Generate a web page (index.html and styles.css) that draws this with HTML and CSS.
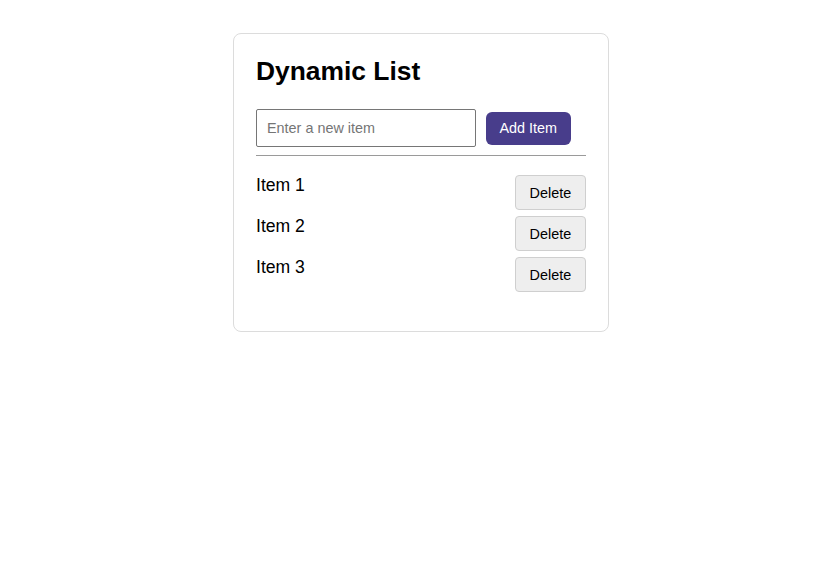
FILE: index.html
```html
<!DOCTYPE html>
<html>
<head>
<meta charset="utf-8">
<link rel="stylesheet" href="styles.css">
</head>
<body>
<div class="card">
  <h2 class="title">Dynamic List</h2>
  <div class="add-row">
    <input class="add-input" type="text" placeholder="Enter a new item">
    <button class="add-btn">Add Item</button>
  </div>
  <ul class="list">
    <li class="item"><span class="item-text">Item 1</span><button class="del-btn">Delete</button></li>
    <li class="item"><span class="item-text">Item 2</span><button class="del-btn">Delete</button></li>
    <li class="item"><span class="item-text">Item 3</span><button class="del-btn">Delete</button></li>
  </ul>
</div>
</body>
</html>
```
FILE: styles.css
```css
html, body {
  margin: 0;
  padding: 0;
  background: #fff;
  font-family: "Liberation Sans", Arial, sans-serif;
  color: #000;
}
.card {
  margin: 33px 0 0 233px;
  width: 330px;
  padding: 22px;
  border: 1px solid #dcdcdc;
  border-radius: 8px;
}
.title {
  margin: 0 0 23px 0;
  font-size: 26.4px;
  font-weight: bold;
  line-height: 30px;
}
.add-row {
  display: flex;
  align-items: center;
  gap: 10px;
  padding-bottom: 8px;
  border-bottom: 1px solid #9a9a9a;
}
.add-input {
  box-sizing: border-box;
  width: 220px;
  height: 38px;
  padding: 0 10px;
  margin: 0;
  border: 1px solid #767676;
  border-radius: 2px;
  font-family: "Liberation Sans", Arial, sans-serif;
  font-size: 14.4px;
}
.add-input::placeholder {
  color: #757575;
}
.add-btn {
  margin: 0;
  height: 33px;
  padding: 0 13.5px;
  border: none;
  border-radius: 6px;
  background: #483d8b;
  color: #fff;
  font-family: "Liberation Sans", Arial, sans-serif;
  font-size: 14.4px;
}
.list {
  list-style: none;
  margin: 19px 0 0 0;
  padding: 0 0 16.5px 0;
  display: flex;
  flex-direction: column;
  gap: 6px;
}
.item {
  display: flex;
  justify-content: space-between;
  align-items: flex-start;
}
.item-text {
  font-size: 17.6px;
  line-height: 21px;
}
.del-btn {
  margin: 0;
  height: 35px;
  padding: 1px 13.8px 0;
  border: 1px solid #cfcfcf;
  border-radius: 4px;
  background: #eeeeee;
  color: #000;
  font-family: "Liberation Sans", Arial, sans-serif;
  font-size: 14.4px;
}
```
